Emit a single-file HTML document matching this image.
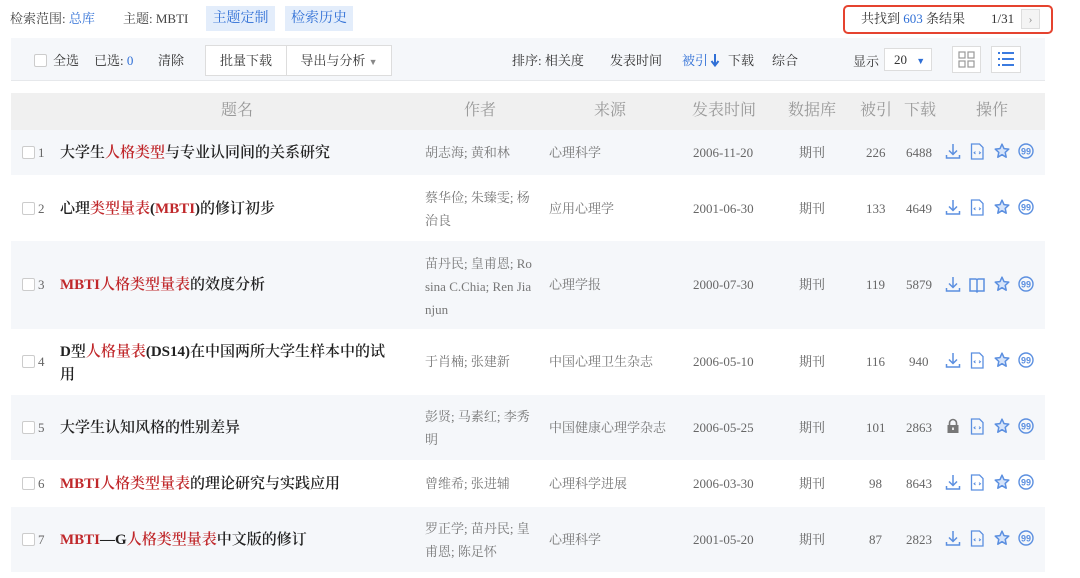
<!DOCTYPE html>
<html><head><meta charset="utf-8"><style>
*{margin:0;padding:0;box-sizing:border-box}
body{width:1080px;height:578px;background:#fff;position:relative;overflow:hidden;font-family:"Liberation Serif","Noto Serif CJK SC",serif;color:#333}
.a{position:absolute;white-space:nowrap}
.s{font-family:"Liberation Serif","Noto Serif CJK SC",serif;line-height:16px}
.blue{color:#2f6fd6}
.red{color:#c0282b}
.btnb{background:#e3edfb;color:#2f6fd6;font-size:14px;height:25px;text-align:center}
.bar{left:11px;top:38px;width:1034px;height:43px;background:#f5f7fa;border-bottom:1px solid #e6e8eb}
.cb{width:13px;height:13px;border:1px solid #ccc;border-radius:2px;background:#fff}
.row{left:11px;width:1034px}
.hd{font-size:16px;color:#999;top:102px;line-height:18px}
.t{font-size:15px;color:#222;font-weight:600;line-height:20px;font-family:"Liberation Serif","Noto Serif CJK SC",serif}
.g{font-size:13px;color:#777;line-height:23px}
.n{font-size:13px;color:#666;line-height:16px}
</style></head><body>
<div class="a s" style="left:10px;top:11px;font-size:13px;color:#444">检索范围: <span class="blue">总库</span></div>
<div class="a s" style="left:123px;top:11px;font-size:13px;color:#444">主题: MBTI</div>
<div class="a s btnb" style="left:206px;top:6px;width:69px;line-height:25px">主题定制</div>
<div class="a s btnb" style="left:285px;top:6px;width:68px;line-height:25px">检索历史</div>
<div class="a" style="left:843px;top:5px;width:210px;height:29px;border:2px solid #e5432f;border-radius:5px"></div>
<div class="a s" style="left:861px;top:11px;font-size:13px;color:#333">共找到 <span class="blue">603</span> 条结果</div>
<div class="a s" style="left:991px;top:11px;font-size:13px;color:#333">1/31</div>
<div class="a" style="left:1021px;top:9px;width:19px;height:20px;border:1px solid #ddd;background:#f4f4f4;color:#999;font-size:12px;text-align:center;line-height:18px">›</div>

<div class="a bar"></div>
<div class="a cb" style="left:34px;top:54px"></div>
<div class="a s" style="left:53px;top:53px;font-size:13px">全选</div>
<div class="a s" style="left:94px;top:53px;font-size:13px">已选: <span class="blue">0</span></div>
<div class="a s" style="left:158px;top:53px;font-size:13px">清除</div>
<div class="a s" style="left:205px;top:45px;width:82px;height:31px;border:1px solid #ddd;background:#fff;font-size:13px;text-align:center;line-height:29px">批量下载</div>
<div class="a s" style="left:286px;top:45px;width:106px;height:31px;border:1px solid #ddd;background:#fff;font-size:13px;text-align:center;line-height:29px">导出与分析 <span style="font-size:9px;color:#888">▼</span></div>
<div class="a s" style="left:512px;top:53px;font-size:13px">排序: 相关度</div>
<div class="a s" style="left:610px;top:53px;font-size:13px">发表时间</div>
<div class="a s blue" style="left:682px;top:53px;font-size:13px">被引<svg width="10" height="13" viewBox="0 0 10 13" style="vertical-align:-2px;margin-left:2px"><path d="M5 0v10M1.5 7L5 11.5 8.5 7" fill="none" stroke="#2f6fd6" stroke-width="2"/></svg></div>
<div class="a s" style="left:728px;top:53px;font-size:13px">下载</div>
<div class="a s" style="left:772px;top:53px;font-size:13px">综合</div>
<div class="a s" style="left:853px;top:54px;font-size:13px">显示</div>
<div class="a s" style="left:884px;top:48px;width:48px;height:23px;border:1px solid #ddd;background:#fff;font-size:13px;padding-left:9px;line-height:21px">20 <span class="blue" style="font-size:9px;margin-left:6px">▼</span></div>
<div class="a" style="left:952px;top:46px;width:29px;height:27px;border:1px solid #ddd;background:#fff"><svg width="27" height="25" viewBox="0 0 27 25"><g fill="none" stroke="#999" stroke-width="1.2"><rect x="6" y="5" width="6" height="6"/><rect x="15" y="5" width="6" height="6"/><rect x="6" y="14" width="6" height="6"/><rect x="15" y="14" width="6" height="6"/></g></svg></div>
<div class="a" style="left:991px;top:46px;width:30px;height:27px;border:1px solid #ddd;background:#fff"><svg width="28" height="25" viewBox="0 0 28 25"><g stroke="#3b7be0" stroke-width="2"><line x1="6" y1="6" x2="8" y2="6"/><line x1="10" y1="6" x2="22" y2="6"/><line x1="6" y1="12" x2="8" y2="12"/><line x1="10" y1="12" x2="22" y2="12"/><line x1="6" y1="18" x2="8" y2="18"/><line x1="10" y1="18" x2="22" y2="18"/></g></svg></div>

<div class="a row" style="top:93px;height:37px;background:#f0f0f0"></div>
<div class="a hd s" style="left:221px">题名</div>
<div class="a hd s" style="left:464px">作者</div>
<div class="a hd s" style="left:594px">来源</div>
<div class="a hd s" style="left:692px">发表时间</div>
<div class="a hd s" style="left:788px">数据库</div>
<div class="a hd s" style="left:860px">被引</div>
<div class="a hd s" style="left:904px">下载</div>
<div class="a hd s" style="left:976px">操作</div>

<div class="a row" style="top:130px;height:45px;background:#f5f7fa"></div>
<div class="a row" style="top:241px;height:88px;background:#f5f7fa"></div>
<div class="a row" style="top:395px;height:65px;background:#f5f7fa"></div>
<div class="a row" style="top:507px;height:65px;background:#f5f7fa"></div>

<svg width="0" height="0" style="position:absolute"><defs>
<g id="dl"><path d="M8 1v10M4 7.5L8 11.5l4-4M1.5 12v3h13v-3" fill="none" stroke="#5b8fe0" stroke-width="1.5"/></g>
<g id="doc"><path d="M2.5 1h8l3.5 3.5V16h-11.5z" fill="none" stroke="#5b8fe0" stroke-width="1.3"/><path d="M6.5 11l-1.5-1.2 1.5-1.2M10 8.6l1.5 1.2L10 11" fill="none" stroke="#5b8fe0" stroke-width="1"/></g>
<g id="book"><path d="M1 3h6l1 1 1-1h6v12H9l-1 1-1-1H1zM8 4v11" fill="none" stroke="#5b8fe0" stroke-width="1.5"/></g>
<g id="star"><path d="M8 1.2l2 4.4 4.8.5-3.6 3.3 1 4.8L8 11.7 3.8 14.2l1-4.8L1.2 6.1 6 5.6z" fill="#d6e4fa" stroke="#5b8fe0" stroke-width="1.5" stroke-linejoin="round"/></g>
<g id="q"><circle cx="8" cy="8" r="7" fill="none" stroke="#5b8fe0" stroke-width="1.4"/><text x="8" y="11.5" font-size="9" font-weight="bold" text-anchor="middle" fill="#5b8fe0" font-family="Liberation Sans">99</text></g>
<g id="lock"><path d="M4.5 7V5a3.5 3.5 0 0 1 7 0V7" fill="none" stroke="#777" stroke-width="1.6"/><rect x="2.5" y="7" width="11" height="8" fill="#777"/><rect x="7.2" y="9.5" width="1.6" height="2.5" fill="#fff"/></g>
</defs></svg>

<div class="a cb" style="left:22px;top:146px"></div><div class="a n" style="left:38px;top:145px">1</div>
<div class="a t" style="left:60px;top:143px">大学生<span class="red">人格类型</span>与专业认同间的关系研究</div>
<div class="a g" style="left:425px;top:141px">胡志海; 黄和林</div>
<div class="a g" style="left:549px;top:141px">心理科学</div>
<div class="a n" style="left:693px;top:145px">2006-11-20</div><div class="a n" style="left:799px;top:145px">期刊</div>
<div class="a n" style="left:866px;top:145px">226</div><div class="a n" style="left:906px;top:145px">6488</div>

<div class="a cb" style="left:22px;top:202px"></div><div class="a n" style="left:38px;top:201px">2</div>
<div class="a t" style="left:60px;top:199px">心理<span class="red">类型量表</span>(<span class="red">MBTI</span>)的修订初步</div>
<div class="a g" style="left:425px;top:186px">蔡华俭; 朱臻雯; 杨<br>治良</div>
<div class="a g" style="left:549px;top:197px">应用心理学</div>
<div class="a n" style="left:693px;top:201px">2001-06-30</div><div class="a n" style="left:799px;top:201px">期刊</div>
<div class="a n" style="left:866px;top:201px">133</div><div class="a n" style="left:906px;top:201px">4649</div>

<div class="a cb" style="left:22px;top:278px"></div><div class="a n" style="left:38px;top:277px">3</div>
<div class="a t" style="left:60px;top:275px"><span class="red">MBTI人格类型量表</span>的效度分析</div>
<div class="a g" style="left:425px;top:252px">苗丹民; 皇甫恩; Ro<br>sina C.Chia; Ren Jia<br>njun</div>
<div class="a g" style="left:549px;top:273px">心理学报</div>
<div class="a n" style="left:693px;top:277px">2000-07-30</div><div class="a n" style="left:799px;top:277px">期刊</div>
<div class="a n" style="left:866px;top:277px">119</div><div class="a n" style="left:906px;top:277px">5879</div>

<div class="a cb" style="left:22px;top:355px"></div><div class="a n" style="left:38px;top:354px">4</div>
<div class="a t" style="left:60px;top:341px;line-height:23px">D型<span class="red">人格量表</span>(DS14)在中国两所大学生样本中的试<br>用</div>
<div class="a g" style="left:425px;top:350px">于肖楠; 张建新</div>
<div class="a g" style="left:549px;top:350px">中国心理卫生杂志</div>
<div class="a n" style="left:693px;top:354px">2006-05-10</div><div class="a n" style="left:799px;top:354px">期刊</div>
<div class="a n" style="left:866px;top:354px">116</div><div class="a n" style="left:909px;top:354px">940</div>

<div class="a cb" style="left:22px;top:421px"></div><div class="a n" style="left:38px;top:420px">5</div>
<div class="a t" style="left:60px;top:418px">大学生认知风格的性别差异</div>
<div class="a g" style="left:425px;top:405px">彭贤; 马素红; 李秀<br>明</div>
<div class="a g" style="left:549px;top:416px">中国健康心理学杂志</div>
<div class="a n" style="left:693px;top:420px">2006-05-25</div><div class="a n" style="left:799px;top:420px">期刊</div>
<div class="a n" style="left:866px;top:420px">101</div><div class="a n" style="left:906px;top:420px">2863</div>

<div class="a cb" style="left:22px;top:477px"></div><div class="a n" style="left:38px;top:476px">6</div>
<div class="a t" style="left:60px;top:474px"><span class="red">MBTI人格类型量表</span>的理论研究与实践应用</div>
<div class="a g" style="left:425px;top:472px">曾维希; 张进辅</div>
<div class="a g" style="left:549px;top:472px">心理科学进展</div>
<div class="a n" style="left:693px;top:476px">2006-03-30</div><div class="a n" style="left:799px;top:476px">期刊</div>
<div class="a n" style="left:869px;top:476px">98</div><div class="a n" style="left:906px;top:476px">8643</div>

<div class="a cb" style="left:22px;top:533px"></div><div class="a n" style="left:38px;top:532px">7</div>
<div class="a t" style="left:60px;top:530px"><span class="red">MBTI</span>—G<span class="red">人格类型量表</span>中文版的修订</div>
<div class="a g" style="left:425px;top:517px">罗正学; 苗丹民; 皇<br>甫恩; 陈足怀</div>
<div class="a g" style="left:549px;top:528px">心理科学</div>
<div class="a n" style="left:693px;top:532px">2001-05-20</div><div class="a n" style="left:799px;top:532px">期刊</div>
<div class="a n" style="left:869px;top:532px">87</div><div class="a n" style="left:906px;top:532px">2823</div>

<svg class="a" style="left:944px;top:143px" width="100" height="18"><use href="#dl" x="1"/><use href="#doc" x="25"/><use href="#star" x="50"/><use href="#q" x="74"/></svg>
<svg class="a" style="left:944px;top:199px" width="100" height="18"><use href="#dl" x="1"/><use href="#doc" x="25"/><use href="#star" x="50"/><use href="#q" x="74"/></svg>
<svg class="a" style="left:944px;top:276px" width="100" height="18"><use href="#dl" x="1"/><use href="#book" x="25"/><use href="#star" x="50"/><use href="#q" x="74"/></svg>
<svg class="a" style="left:944px;top:352px" width="100" height="18"><use href="#dl" x="1"/><use href="#doc" x="25"/><use href="#star" x="50"/><use href="#q" x="74"/></svg>
<svg class="a" style="left:944px;top:418px" width="100" height="18"><use href="#lock" x="1"/><use href="#doc" x="25"/><use href="#star" x="50"/><use href="#q" x="74"/></svg>
<svg class="a" style="left:944px;top:474px" width="100" height="18"><use href="#dl" x="1"/><use href="#doc" x="25"/><use href="#star" x="50"/><use href="#q" x="74"/></svg>
<svg class="a" style="left:944px;top:530px" width="100" height="18"><use href="#dl" x="1"/><use href="#doc" x="25"/><use href="#star" x="50"/><use href="#q" x="74"/></svg>
</body></html>
